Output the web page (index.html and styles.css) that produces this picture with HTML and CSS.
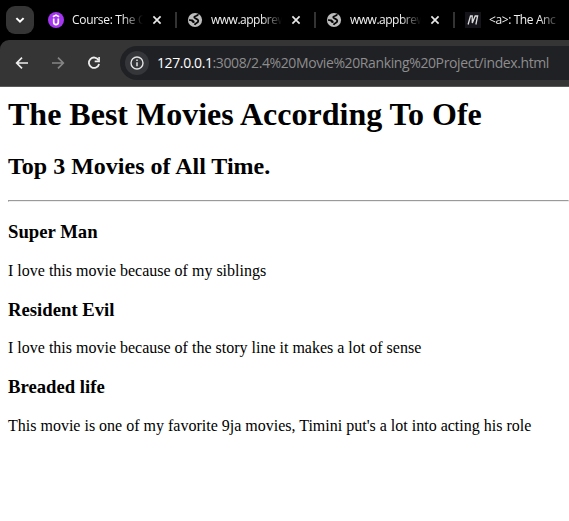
FILE: index.html
```html
<!DOCTYPE html>
<html lang="en">
<head>
<meta charset="utf-8">
<title>Movie Ranking</title>
<link rel="stylesheet" href="styles.css">
</head>
<body>
<svg class="defs" width="0" height="0" aria-hidden="true">
  <symbol id="close" viewBox="0 0 10 10"><path d="M1.4 1.4 8.6 8.6M8.6 1.4 1.4 8.6" stroke="#e8e8e8" stroke-width="1.7"/></symbol>
  <symbol id="globe" viewBox="0 0 16 16"><circle cx="8" cy="8" r="7.1" fill="#bcbcbc"/><path d="M10.8 2.2C11.2 4.4 7.4 3.6 7.2 5.2C7 6.9 11.2 6.2 11.3 8.8C11.4 11 8.6 10.8 7.6 12.9" fill="none" stroke="#050505" stroke-width="1.8"/><path d="M1.9 7.2 5.6 7.4 7.6 9.2 7.4 11.2 5.2 10.6 4.4 9.2 1.9 8.8z" fill="#050505"/></symbol>
</svg>
<header class="browser">
  <div class="tabs">
    <button class="tab-search" aria-label="Search tabs"><svg width="28" height="28" viewBox="0 0 28 28"><path d="m10.4 12.1 3.6 3.6 3.6-3.6" fill="none" stroke="#fff" stroke-width="2"/></svg></button>
    <div class="tab">
      <svg class="favicon" viewBox="0 0 16 16"><circle cx="8" cy="8" r="8" fill="#a435f0"/><path d="M4.9 4.8 8 3.1l3.1 1.7M5.7 6.5v3.8q0 2.3 2.3 2.3t2.3-2.3V6.5" fill="none" stroke="#fff" stroke-width="1.7"/></svg>
      <span class="title">Course: The C</span>
      <svg class="close"><use href="#close"/></svg>
    </div>
    <div class="tab">
      <svg class="favicon"><use href="#globe"/></svg>
      <span class="title site">www.appbrew</span>
      <svg class="close"><use href="#close"/></svg>
    </div>
    <div class="tab">
      <svg class="favicon"><use href="#globe"/></svg>
      <span class="title site">www.appbrew</span>
      <svg class="close"><use href="#close"/></svg>
    </div>
    <div class="tab">
      <svg class="favicon" viewBox="0 0 16 16"><path d="M0 0h16v16H0z" fill="#15141a"/><path d="M3.1 12.5 5.5 4 7.2 4 7.3 11 10.2 4 12.6 4 10.9 12.5" fill="none" stroke="#ddd" stroke-width="1.3"/></svg>
      <span class="title anchor">&lt;a&gt;: The Anc</span>
    </div>
  </div>
  <div class="toolbar">
    <svg class="nav" viewBox="0 0 16 16"><path d="M14 8H3M8 2.7 2.7 8 8 13.3" fill="none" stroke="#ededed" stroke-width="1.7"/></svg>
    <svg class="nav" viewBox="0 0 16 16"><path d="M2 8h11M8 2.7 13.3 8 8 13.3" fill="none" stroke="#858585" stroke-width="1.7"/></svg>
    <svg class="nav" viewBox="0 0 16 16"><path d="M12.6 5.2A5.2 5.2 0 1 0 13.1 9" fill="none" stroke="#ededed" stroke-width="1.8"/><path d="M13.9 2v5.2H8.7V5.6h3.6V2z" fill="#ededed"/></svg>
    <div class="address">
      <span class="info"><svg width="16" height="16" viewBox="0 0 16 16"><circle cx="8" cy="8" r="6" fill="none" stroke="#e3e3e3" stroke-width="1.4"/><path d="M8 7.2v4M8 4.6v1.5" stroke="#e3e3e3" stroke-width="1.5"/></svg></span>
      <span class="url"><span class="host">127.0.0.1</span><span class="path">:3008/2.4%20Movie%20Ranking%20Project/index.html</span></span>
    </div>
  </div>
</header>
<main class="page">
  <h1>The Best Movies According To Ofe</h1>
  <h2>Top 3 Movies of All Time.</h2>
  <hr>
  <h3>Super Man</h3>
  <p>I love this movie because of my siblings</p>
  <h3>Resident Evil</h3>
  <p>I love this movie because of the story line it makes a lot of sense</p>
  <h3>Breaded life</h3>
  <p>This movie is one of my favorite 9ja movies, Timini put's a lot into acting his role</p>
</main>
</body>
</html>
```
FILE: styles.css
```css
body {
  margin: 0;
  background: #fff;
  color: #000;
  font-family: "Liberation Serif", serif;
  overflow: hidden;
}

.defs {
  display: block;
}

.browser {
  background: #000;
  font-family: "Open Sans", "Noto Sans", sans-serif;
}

.tabs {
  display: flex;
  align-items: center;
  height: 40px;
  padding-left: 6px;
}

.tab-search {
  flex: none;
  width: 28px;
  height: 28px;
  margin-right: 4px;
  padding: 0;
  border: 0;
  border-radius: 9px;
  background: #353535;
}

.tab-search svg {
  display: block;
}

.tab {
  display: flex;
  flex: none;
  align-items: center;
  box-sizing: border-box;
  width: 139px;
  height: 16px;
  padding-left: 10px;
  border-right: 2px solid #333;
}

.tab:last-child {
  border-right: 0;
}

.favicon {
  flex: none;
  width: 16px;
  height: 16px;
  margin-right: 8px;
}

.title {
  flex: none;
  width: 71px;
  color: #f2f2f2;
  font-size: 12px;
  line-height: 18px;
  letter-spacing: -0.3px;
  white-space: nowrap;
  -webkit-mask-image: linear-gradient(to right, #000 50px, transparent 71px);
  mask-image: linear-gradient(to right, #000 50px, transparent 71px);
}

.site {
  letter-spacing: -0.5px;
}

.anchor {
  letter-spacing: -0.4px;
}

.close {
  flex: none;
  width: 10px;
  height: 10px;
  margin-left: 9px;
}

.toolbar {
  display: flex;
  align-items: center;
  box-sizing: border-box;
  height: 47px;
  padding-left: 14px;
  border-bottom: 1px solid #5a5a5a;
  border-top-left-radius: 9px;
  background: #353535;
}

.nav {
  flex: none;
  width: 16px;
  height: 16px;
  margin-right: 20px;
}

.address {
  display: flex;
  flex: 1;
  align-items: center;
  box-sizing: border-box;
  min-width: 0;
  height: 34px;
  margin-left: -2px;
  padding-left: 5px;
  border-radius: 17px 0 0 17px;
  background: #202124;
}

.info {
  display: flex;
  flex: none;
  align-items: center;
  justify-content: center;
  width: 24px;
  height: 24px;
  margin-right: 8px;
  border-radius: 50%;
  background: #353639;
}

.url {
  font-size: 14px;
  line-height: 20px;
  letter-spacing: -0.39px;
  white-space: nowrap;
}

.host {
  color: #fff;
}

.path {
  color: #8d8d8f;
}

.page {
  display: flow-root;
  padding: 9px 0 8px 8px;
}

.page h1 {
  margin-top: 0;
  margin-bottom: 20.44px;
}
```
